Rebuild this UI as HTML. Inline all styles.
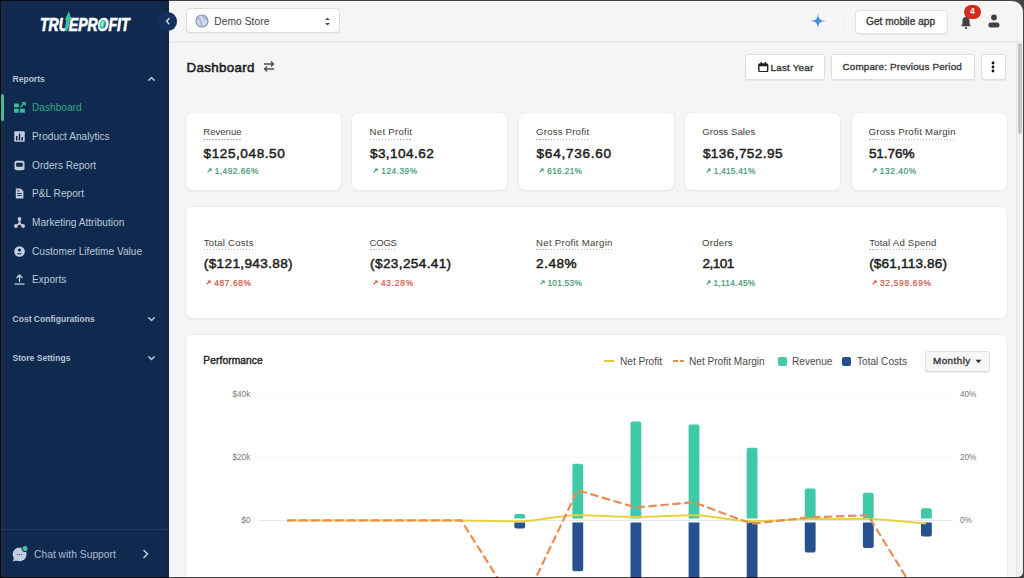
<!DOCTYPE html>
<html><head><meta charset="utf-8">
<style>
*{margin:0;padding:0;box-sizing:border-box}
html,body{width:1024px;height:578px;overflow:hidden;background:#0b0f18}
body{font-family:"Liberation Sans",sans-serif;position:relative}
#frame{position:absolute;left:0;top:0;width:1024px;height:578px;background:#f5f5f5;overflow:hidden}
#mask{position:absolute;left:1px;top:1px;width:1022px;height:576px;border-radius:2px 11px 5px 3px;box-shadow:0 0 0 30px rgba(0,0,0,.72);pointer-events:none}
#side{position:absolute;left:0;top:0;width:169px;height:578px;background:#0f2a4e}
#topbar{position:absolute;left:169px;top:0;width:855px;height:43px;background:#f5f5f5;border-bottom:2px solid #e8e8e8}
.t{position:absolute;white-space:nowrap;line-height:1}
.card{position:absolute;background:#fff;border-radius:6px;box-shadow:0 0 1.5px rgba(0,0,0,.09),0 1px 3px rgba(0,0,0,.06)}
.btn{position:absolute;background:#fff;border:1px solid #dcdcdc;border-radius:3px;box-shadow:0 1px 1px rgba(0,0,0,.06)}
.lbl{font-size:9.6px;color:#404040;padding-bottom:3px;line-height:1;background:repeating-linear-gradient(to right,#b8b8b8 0 1.5px,transparent 1.5px 3px) left bottom/100% 1px no-repeat}
.lbln{font-size:9.6px;color:#404040;line-height:1}
.val{font-size:13.6px;color:#1f1f1f;font-weight:normal;letter-spacing:.5px;-webkit-text-stroke:.5px #1f1f1f}
.pct{font-size:8.3px;font-weight:normal;-webkit-text-stroke:.22px currentColor}
.arr{position:absolute;width:5px;height:5px}
.g{color:#45957a}.r{color:#d4544a}
.nav{position:absolute;left:32px;font-size:10.15px;color:#bdc8d8;white-space:nowrap;line-height:1}
.sec{position:absolute;left:12.5px;font-size:8.55px;font-weight:bold;color:#b7c2d2;white-space:nowrap;line-height:1}
.ico{position:absolute;left:14px;width:11px;height:11px}
.leg{position:absolute;font-size:10.1px;color:#4a4a4a;white-space:nowrap;line-height:1}
.ax{position:absolute;font-size:8.2px;color:#777;white-space:nowrap;line-height:1}
</style></head><body>
<div id="frame">
  <!-- SIDEBAR -->
  <div id="side">
    <div style="position:absolute;left:1px;top:0;width:5px;height:578px;background:linear-gradient(to right,rgba(50,50,62,.32),rgba(50,50,62,.22) 70%,rgba(50,50,62,0))"></div>
    <!-- logo -->
    <svg style="position:absolute;left:0;top:0" width="169" height="42" viewBox="0 0 169 42">
      <text x="40" y="30.5" font-family="Liberation Sans" font-weight="bold" font-style="italic" font-size="17.6" fill="#fff" stroke="#fff" stroke-width="0.7" textLength="89.5" lengthAdjust="spacingAndGlyphs">TRUEPROFIT</text>
      <path d="M64.4 31 L66.7 19.5 L69.6 19.5 L67.3 31 Z" fill="#35c08e"/>
      <path d="M64.8 19.8 L68.8 11.3 L71.8 19.8 Z" fill="#35c08e"/>
      <ellipse cx="102.2" cy="24.2" rx="2.6" ry="4.6" transform="rotate(12 102.2 24.2)" fill="#4fcf9a"/>
      <ellipse cx="102.4" cy="23.6" rx="1.1" ry="2.5" transform="rotate(12 102.4 23.6)" fill="#a9e8cc"/>
    </svg>
    <div class="sec" style="top:74.8px">Reports</div>
    <svg style="position:absolute;left:147px;top:75.5px" width="9" height="6" viewBox="0 0 9 6"><path d="M1.3 4.6 L4.5 1.6 L7.7 4.6" fill="none" stroke="#a9b8d0" stroke-width="1.6"/></svg>
    <div style="position:absolute;left:1.2px;top:93.5px;width:2.5px;height:27.5px;background:#3cc29a;border-radius:2px"></div>
    <!-- dashboard icon -->
    <svg class="ico" style="left:14px;top:101px;width:12px;height:12px" viewBox="0 0 12 12"><g fill="#3dbb98"><rect x="0" y="2.6" width="4.8" height="3.9" rx=".4"/><rect x="0" y="7.7" width="4.8" height="4.1" rx=".4"/><rect x="6" y="7.7" width="4.8" height="4.1" rx=".4"/></g><path d="M6.3 6.3 L10.3 2.3" stroke="#3dbb98" stroke-width="1.3"/><path d="M7.3 1 H11.6 V5.3 Z" fill="#3dbb98"/></svg>
    <div class="nav" style="top:103.4px;color:#38a783">Dashboard</div>
    <!-- product analytics -->
    <svg class="ico" style="top:130.5px" viewBox="0 0 11 11"><rect x="0.3" y="0.3" width="10.4" height="10.4" rx="1" fill="#c3cddb"/><g fill="#0f2a4e"><rect x="2" y="5" width="1.5" height="4.5"/><rect x="4.8" y="2.5" width="1.5" height="7"/><rect x="7.5" y="6" width="1.5" height="3.5"/></g></svg>
    <div class="nav" style="top:132px">Product Analytics</div>
    <!-- orders -->
    <svg class="ico" style="top:159.5px" viewBox="0 0 11 11"><rect x="0.5" y="0.8" width="10" height="9.4" rx="2" fill="#c3cddb"/><path d="M2.2 2.8 H8.8 V6 Q8.8 6.8 8 6.8 H3 Q2.2 6.8 2.2 6 Z" fill="#0f2a4e"/></svg>
    <div class="nav" style="top:160.7px">Orders Report</div>
    <!-- P&L -->
    <svg class="ico" style="top:187.5px" viewBox="0 0 11 11"><path d="M1.8 0.4 H6.6 L9.4 3.2 V10.6 H1.8 Z" fill="#c3cddb"/><g fill="#0f2a4e"><rect x="3.2" y="5" width="4.6" height=".9"/><rect x="3.2" y="7.1" width="4.6" height=".9"/><rect x="3.2" y="2.5" width="2.2" height=".9"/></g></svg>
    <div class="nav" style="top:189.3px">P&amp;L Report</div>
    <!-- marketing -->
    <svg class="ico" style="top:216.5px" viewBox="0 0 11 11"><g fill="#c3cddb"><circle cx="5.5" cy="1.9" r="1.9"/><circle cx="1.9" cy="9" r="1.9"/><circle cx="9.1" cy="9" r="1.9"/><circle cx="5.5" cy="6.4" r="1.3"/></g><path d="M5.5 2 V6.4 L1.9 9 M5.5 6.4 L9.1 9" fill="none" stroke="#c3cddb" stroke-width="1.6"/></svg>
    <div class="nav" style="top:217.9px">Marketing Attribution</div>
    <!-- customer -->
    <svg class="ico" style="top:245.5px" viewBox="0 0 11 11"><circle cx="5.5" cy="5.5" r="5.3" fill="#c3cddb"/><circle cx="5.5" cy="4" r="1.6" fill="#0f2a4e"/><path d="M2.8 8.3 Q5.5 5.8 8.2 8.3" fill="#0f2a4e"/></svg>
    <div class="nav" style="top:246.6px">Customer Lifetime Value</div>
    <!-- exports -->
    <svg class="ico" style="top:274px" viewBox="0 0 11 11"><path d="M5.5 1 V8 M2.5 4 L5.5 1 L8.5 4" fill="none" stroke="#c3cddb" stroke-width="1.3"/><rect x="0.5" y="9.4" width="10" height="1.3" fill="#c3cddb"/></svg>
    <div class="nav" style="top:275.2px">Exports</div>

    <div class="sec" style="top:314.8px">Cost Configurations</div>
    <svg style="position:absolute;left:147px;top:316px" width="9" height="6" viewBox="0 0 9 6"><path d="M1.3 1.4 L4.5 4.4 L7.7 1.4" fill="none" stroke="#a9b8d0" stroke-width="1.6"/></svg>
    <div class="sec" style="top:353.8px">Store Settings</div>
    <svg style="position:absolute;left:147px;top:355px" width="9" height="6" viewBox="0 0 9 6"><path d="M1.3 1.4 L4.5 4.4 L7.7 1.4" fill="none" stroke="#a9b8d0" stroke-width="1.6"/></svg>

    <div style="position:absolute;left:161px;top:0;width:8px;height:578px;background:linear-gradient(to right,rgba(0,0,0,0),rgba(0,0,0,.07))"></div>
    <div style="position:absolute;left:0;top:529px;width:169px;height:1px;background:#1f3c63"></div>
    <!-- chat icon -->
    <svg style="position:absolute;left:11px;top:545px" width="18" height="18" viewBox="0 0 18 18"><circle cx="8.6" cy="9.3" r="6.9" fill="#c4cee2"/><path d="M3.2 12.5 L1.6 16.6 L6.5 15.3 Z" fill="#c4cee2"/><g fill="#3d4a60"><circle cx="6.4" cy="9.6" r=".6"/><circle cx="8.6" cy="9.6" r=".6"/><circle cx="10.8" cy="9.6" r=".6"/></g><circle cx="14" cy="3.6" r="3.1" fill="#42c29a" stroke="#0f2a4e" stroke-width="1"/></svg>
    <div class="nav" style="left:34px;top:549.8px;font-size:10.3px;color:#aebbcf">Chat with Support</div>
    <svg style="position:absolute;left:142px;top:549px" width="7" height="10" viewBox="0 0 7 10"><path d="M1.5 1 L5.5 5 L1.5 9" fill="none" stroke="#c3cddb" stroke-width="1.5"/></svg>
  </div>

  <!-- TOPBAR -->
  <div id="topbar">
    <div class="btn" style="left:16.8px;top:8.2px;width:154px;height:25px;border-radius:4px"></div>
    <svg style="position:absolute;left:26px;top:14px" width="14" height="14" viewBox="0 0 14 14"><circle cx="7" cy="7" r="6" fill="#cfdaf0" stroke="#8797b8" stroke-width="1.2"/><path d="M3 4.5 Q5.2 4.6 5.3 6.6 Q6.8 7.6 6.2 9.8 L7 12 M8.6 1.8 Q8 4.3 10.3 5 L12.3 6.2" fill="none" stroke="#8797b8" stroke-width="1"/></svg>
    <div class="t" style="left:45.2px;top:17.3px;font-size:10.2px;color:#404040;letter-spacing:.1px">Demo Store</div>
    <svg style="position:absolute;left:155.3px;top:16px" width="7" height="11" viewBox="0 0 7 11"><path d="M1 4 L3.5 1.5 L6 4 Z M1 7 L3.5 9.5 L6 7 Z" fill="#555"/></svg>

    <!-- sparkle -->
    <svg style="position:absolute;left:641px;top:13px" width="16" height="16" viewBox="0 0 16 16"><path d="M8 0 C8.2 6 10 7.8 16 8 C10 8.2 8.2 10 8 16 C7.8 10 6 8.2 0 8 C6 7.8 7.8 6 8 0Z" fill="#3a84da"/><circle cx="8" cy="8" r="1.3" fill="#4b98ec"/></svg>
    <div style="position:absolute;left:674px;top:12px;width:1px;height:19px;background:#ececec"></div>
    <div class="btn" style="left:686px;top:10px;width:93px;height:24px;border-radius:4px;border-color:#e2e2e2"></div>
    <div class="t" style="left:697px;top:16.8px;font-size:10.1px;color:#3a3a3a;-webkit-text-stroke:.35px #3a3a3a;letter-spacing:.05px">Get mobile app</div>
    <!-- bell -->
    <svg style="position:absolute;left:790px;top:15px" width="14" height="15" viewBox="0 0 14 15"><path d="M7 2 C4.6 2 3.4 3.9 3.4 6.2 V9.3 L2 11.3 H12 L10.6 9.3 V6.2 C10.6 3.9 9.4 2 7 2Z" fill="#404242"/><circle cx="7" cy="12.9" r="1.1" fill="#404242"/></svg>
    <div style="position:absolute;left:795.2px;top:5.2px;width:16.5px;height:13.5px;border-radius:7px;background:#d32b1d;color:#fff;font-size:8.5px;font-weight:bold;line-height:13.5px;text-align:center">4</div>
    <!-- user -->
    <svg style="position:absolute;left:818px;top:13px" width="14" height="16" viewBox="0 0 14 16"><circle cx="7" cy="4.5" r="2.9" fill="#404242"/><rect x="1.4" y="9.4" width="11.1" height="5" rx="2.5" fill="#404242"/></svg>
  </div>

  <!-- collapse circle -->
  <div style="position:absolute;left:158px;top:12px;width:18.5px;height:18.5px;border-radius:50%;background:#13315c"></div>
  <svg style="position:absolute;left:164.5px;top:17px" width="6" height="9" viewBox="0 0 6 9"><path d="M4.3 1.2 L1.6 4.3 L4.3 7.4" fill="none" stroke="#dfe6f0" stroke-width="1.3"/></svg>

  <!-- TITLE ROW -->
  <div class="t" style="left:186.5px;top:60.6px;font-size:13.3px;color:#1e1e1e;-webkit-text-stroke:.55px #1e1e1e;letter-spacing:.35px">Dashboard</div>
  <svg style="position:absolute;left:262px;top:60px" width="14" height="13" viewBox="0 0 14 13"><path d="M2 4 H11.5 M9 1.5 L11.5 4 L9 6.5 M12 9 H2.5 M5 6.5 L2.5 9 L5 11.5" fill="none" stroke="#4d4d4d" stroke-width="1.35"/></svg>

  <div class="btn" style="left:744.5px;top:54px;width:80.5px;height:25.5px"></div>
  <svg style="position:absolute;left:758.3px;top:61.5px" width="10.5" height="10.5" viewBox="0 0 10.5 10.5"><rect x=".8" y="2" width="8.9" height="7.7" rx="1.2" fill="none" stroke="#222" stroke-width="1.4"/><rect x=".8" y="2" width="8.9" height="2.3" fill="#222"/><rect x="2.5" y="0" width="1.3" height="2.3" fill="#222"/><rect x="6.7" y="0" width="1.3" height="2.3" fill="#222"/></svg>
  <div class="t" style="left:770.5px;top:62.6px;font-size:9.9px;color:#333;-webkit-text-stroke:.35px #333;letter-spacing:.2px">Last Year</div>
  <div class="btn" style="left:830.8px;top:54px;width:144px;height:25.5px"></div>
  <div class="t" style="left:842.5px;top:62.3px;font-size:9.9px;color:#3a3a3a;-webkit-text-stroke:.35px #3a3a3a;letter-spacing:.15px">Compare: Previous Period</div>
  <div class="btn" style="left:980.5px;top:54px;width:25.5px;height:25.5px"></div>
  <svg style="position:absolute;left:991px;top:61px" width="4" height="12" viewBox="0 0 4 12"><circle cx="2" cy="2" r="1.4" fill="#111"/><circle cx="2" cy="6" r="1.4" fill="#111"/><circle cx="2" cy="10" r="1.4" fill="#111"/></svg>

  <!-- scrollbar -->
  <div style="position:absolute;left:1016px;top:42px;width:8px;height:540px;background:#f1f1f1;border-left:1px solid #e4e4e4"></div>
  <div style="position:absolute;left:1017.5px;top:42.5px;width:4.5px;height:91px;background:#c4c4c4;border-radius:2px"></div>

  <!-- ROW 1 CARDS -->
  <div class="card" style="left:185.5px;top:112.5px;width:155px;height:77.5px"></div>
  <div class="card" style="left:352px;top:112.5px;width:155px;height:77.5px"></div>
  <div class="card" style="left:518.5px;top:112.5px;width:155px;height:77.5px"></div>
  <div class="card" style="left:685px;top:112.5px;width:155px;height:77.5px"></div>
  <div class="card" style="left:851.5px;top:112.5px;width:155px;height:77.5px"></div>
  <div class="card" style="left:185.5px;top:206.5px;width:821px;height:111px"></div>
  <!--CARDTEXT-->
  <div class="t lbl" style="left:203.3px;top:127.47px;letter-spacing:-0.03px">Revenue</div>
  <div class="t val" style="left:203.5px;top:146.99px;letter-spacing:0.57px">$125,048.50</div>
  <svg class="arr" style="left:206.8px;top:168.4px" viewBox="0 0 5 5"><path d="M0.6 4.4 L3.4 1.6" stroke="#3f8f70" stroke-width="1.1"/><path d="M1.5 0.4 H4.6 V3.5 Z" fill="#3f8f70"/></svg>
  <div class="t pct g" style="left:214.7px;top:166.97px;letter-spacing:0.49px">1,492.66%</div>
  <div class="t lbl" style="left:369.6px;top:127.47px;letter-spacing:0.27px">Net Profit</div>
  <div class="t val" style="left:369.9px;top:146.99px;letter-spacing:0.43px">$3,104.62</div>
  <svg class="arr" style="left:373.4px;top:168.4px" viewBox="0 0 5 5"><path d="M0.6 4.4 L3.4 1.6" stroke="#3f8f70" stroke-width="1.1"/><path d="M1.5 0.4 H4.6 V3.5 Z" fill="#3f8f70"/></svg>
  <div class="t pct g" style="left:381.3px;top:166.97px;letter-spacing:0.51px">124.39%</div>
  <div class="t lbl" style="left:536.1px;top:127.47px;letter-spacing:0.21px">Gross Profit</div>
  <div class="t val" style="left:536.6px;top:146.99px;letter-spacing:0.72px">$64,736.60</div>
  <svg class="arr" style="left:539.3px;top:168.4px" viewBox="0 0 5 5"><path d="M0.6 4.4 L3.4 1.6" stroke="#3f8f70" stroke-width="1.1"/><path d="M1.5 0.4 H4.6 V3.5 Z" fill="#3f8f70"/></svg>
  <div class="t pct g" style="left:547.2px;top:166.97px;letter-spacing:0.34px">616.21%</div>
  <div class="t lbln" style="left:702.3px;top:127.47px;letter-spacing:0.07px">Gross Sales</div>
  <div class="t val" style="left:702.9px;top:146.99px;letter-spacing:0.40px">$136,752.95</div>
  <svg class="arr" style="left:705.9px;top:168.4px" viewBox="0 0 5 5"><path d="M0.6 4.4 L3.4 1.6" stroke="#3f8f70" stroke-width="1.1"/><path d="M1.5 0.4 H4.6 V3.5 Z" fill="#3f8f70"/></svg>
  <div class="t pct g" style="left:713.8px;top:166.97px;letter-spacing:0.23px">1,415.41%</div>
  <div class="t lbl" style="left:868.6px;top:127.47px;letter-spacing:0.24px">Gross Profit Margin</div>
  <div class="t val" style="left:868.9px;top:146.99px;letter-spacing:-0.08px">51.76%</div>
  <svg class="arr" style="left:871.9px;top:168.4px" viewBox="0 0 5 5"><path d="M0.6 4.4 L3.4 1.6" stroke="#3f8f70" stroke-width="1.1"/><path d="M1.5 0.4 H4.6 V3.5 Z" fill="#3f8f70"/></svg>
  <div class="t pct g" style="left:879.8px;top:166.97px;letter-spacing:0.59px">132.40%</div>
  <div class="t lbl" style="left:203.8px;top:237.77px;letter-spacing:0.22px">Total Costs</div>
  <div class="t val" style="left:203.8px;top:257.49px;letter-spacing:0.35px">($121,943.88)</div>
  <svg class="arr" style="left:206.4px;top:280.3px" viewBox="0 0 5 5"><path d="M0.6 4.4 L3.4 1.6" stroke="#d04a3c" stroke-width="1.1"/><path d="M1.5 0.4 H4.6 V3.5 Z" fill="#d04a3c"/></svg>
  <div class="t pct r" style="left:214.3px;top:278.87px;letter-spacing:0.62px">487.68%</div>
  <div class="t lbl" style="left:369.6px;top:237.77px;letter-spacing:-0.29px">COGS</div>
  <div class="t val" style="left:370.1px;top:257.49px;letter-spacing:0.36px">($23,254.41)</div>
  <svg class="arr" style="left:373.0px;top:280.3px" viewBox="0 0 5 5"><path d="M0.6 4.4 L3.4 1.6" stroke="#d04a3c" stroke-width="1.1"/><path d="M1.5 0.4 H4.6 V3.5 Z" fill="#d04a3c"/></svg>
  <div class="t pct r" style="left:380.9px;top:278.87px;letter-spacing:0.81px">43.28%</div>
  <div class="t lbl" style="left:536.1px;top:237.77px;letter-spacing:0.27px">Net Profit Margin</div>
  <div class="t val" style="left:536.1px;top:257.49px;letter-spacing:0.49px">2.48%</div>
  <svg class="arr" style="left:539.5px;top:280.3px" viewBox="0 0 5 5"><path d="M0.6 4.4 L3.4 1.6" stroke="#3f8f70" stroke-width="1.1"/><path d="M1.5 0.4 H4.6 V3.5 Z" fill="#3f8f70"/></svg>
  <div class="t pct g" style="left:547.4px;top:278.87px;letter-spacing:0.27px">101.53%</div>
  <div class="t lbln" style="left:702.1px;top:237.77px;letter-spacing:0.25px">Orders</div>
  <div class="t val" style="left:702.5px;top:257.49px;letter-spacing:-0.53px">2,101</div>
  <svg class="arr" style="left:705.5px;top:280.3px" viewBox="0 0 5 5"><path d="M0.6 4.4 L3.4 1.6" stroke="#3f8f70" stroke-width="1.1"/><path d="M1.5 0.4 H4.6 V3.5 Z" fill="#3f8f70"/></svg>
  <div class="t pct g" style="left:713.4px;top:278.87px;letter-spacing:0.35px">1,114.45%</div>
  <div class="t lbl" style="left:869.2px;top:237.77px;letter-spacing:0.20px">Total Ad Spend</div>
  <div class="t val" style="left:869.2px;top:257.49px;letter-spacing:0.16px">($61,113.86)</div>
  <svg class="arr" style="left:872.1px;top:280.3px" viewBox="0 0 5 5"><path d="M0.6 4.4 L3.4 1.6" stroke="#d04a3c" stroke-width="1.1"/><path d="M1.5 0.4 H4.6 V3.5 Z" fill="#d04a3c"/></svg>
  <div class="t pct r" style="left:880.0px;top:278.87px;letter-spacing:0.74px">32,598.69%</div>
  <!--/CARDTEXT-->

  <!-- PERFORMANCE CARD -->
  <div class="card" style="left:185.5px;top:334.5px;width:821px;height:300px"></div>
  <div class="t" style="left:203.3px;top:356.3px;font-size:10.2px;color:#222;-webkit-text-stroke:.4px #222;letter-spacing:.1px">Performance</div>

  <!-- legend -->
  <div style="position:absolute;left:604px;top:359.5px;width:10px;height:2px;background:#ecc531"></div>
  <div class="leg" style="left:620px;top:356.6px">Net Profit</div>
  <div style="position:absolute;left:673px;top:359.5px;width:4.5px;height:2px;background:#ea8a4a"></div>
  <div style="position:absolute;left:679.5px;top:359.5px;width:4.5px;height:2px;background:#ea8a4a"></div>
  <div class="leg" style="left:689px;top:356.6px">Net Profit Margin</div>
  <div style="position:absolute;left:777.5px;top:356.5px;width:9px;height:9px;border-radius:2px;background:#43c9a5"></div>
  <div class="leg" style="left:792px;top:356.6px">Revenue</div>
  <div style="position:absolute;left:842px;top:356.5px;width:9px;height:9px;border-radius:2px;background:#244f8b"></div>
  <div class="leg" style="left:857px;top:356.6px">Total Costs</div>
  <div class="btn" style="left:924.5px;top:351px;width:65px;height:20.5px;background:#f6f6f6;border-color:#dedede;box-shadow:0 1px 1px rgba(0,0,0,.08)"></div>
  <div class="t" style="left:933px;top:356.3px;font-size:9.9px;color:#333;-webkit-text-stroke:.35px #333;letter-spacing:.45px">Monthly</div>
  <svg style="position:absolute;left:974.5px;top:358.5px" width="7" height="5" viewBox="0 0 7 5"><path d="M0.5 0.8 H6.5 L3.5 4.2Z" fill="#333"/></svg>

  <!-- axes -->
  <div class="ax" style="left:232.5px;top:390.8px">$40k</div>
  <div class="ax" style="left:232.5px;top:453.8px">$20k</div>
  <div class="ax" style="left:241.5px;top:517.0px">$0</div>
  <div class="ax" style="left:960px;top:390.8px">40%</div>
  <div class="ax" style="left:960px;top:453.8px">20%</div>
  <div class="ax" style="left:960px;top:517.0px">0%</div>

  <svg style="position:absolute;left:0;top:0" width="1024" height="578" viewBox="0 0 1024 578">
    <g stroke="#eeeeee" stroke-width="1" stroke-dasharray="2 2">
      <line x1="258" y1="394.5" x2="953" y2="394.5"/>
      <line x1="258" y1="457.5" x2="953" y2="457.5"/>
    </g>
    <line x1="258" y1="520.5" x2="953" y2="520.5" stroke="#e8e8e8" stroke-width="1"/>
    <!-- bars -->
    <path d="M514.3 518.6 V516.0 Q514.3 514.0 516.3 514.0 H523.1 Q525.1 514.0 525.1 516.0 V518.6 Z" fill="#40c9a7"/>
    <path d="M514.3 522.6 V526.6 Q514.3 528.6 516.3 528.6 H523.1 Q525.1 528.6 525.1 526.6 V522.6 Z" fill="#26518e"/>
    <path d="M572.4 518.6 V465.8 Q572.4 463.8 574.4 463.8 H581.2 Q583.2 463.8 583.2 465.8 V518.6 Z" fill="#40c9a7"/>
    <path d="M572.4 522.6 V569.3 Q572.4 571.3 574.4 571.3 H581.2 Q583.2 571.3 583.2 569.3 V522.6 Z" fill="#26518e"/>
    <path d="M630.5 518.6 V423.6 Q630.5 421.6 632.5 421.6 H639.3 Q641.3 421.6 641.3 423.6 V518.6 Z" fill="#40c9a7"/>
    <path d="M630.5 522.6 V618.0 Q630.5 620.0 632.5 620.0 H639.3 Q641.3 620.0 641.3 618.0 V522.6 Z" fill="#26518e"/>
    <path d="M688.6 518.6 V426.5 Q688.6 424.5 690.6 424.5 H697.4 Q699.4 424.5 699.4 426.5 V518.6 Z" fill="#40c9a7"/>
    <path d="M688.6 522.6 V618.0 Q688.6 620.0 690.6 620.0 H697.4 Q699.4 620.0 699.4 618.0 V522.6 Z" fill="#26518e"/>
    <path d="M746.7 518.6 V449.8 Q746.7 447.8 748.7 447.8 H755.5 Q757.5 447.8 757.5 449.8 V518.6 Z" fill="#40c9a7"/>
    <path d="M746.7 522.6 V618.0 Q746.7 620.0 748.7 620.0 H755.5 Q757.5 620.0 757.5 618.0 V522.6 Z" fill="#26518e"/>
    <path d="M804.8 518.6 V490.5 Q804.8 488.5 806.8 488.5 H813.6 Q815.6 488.5 815.6 490.5 V518.6 Z" fill="#40c9a7"/>
    <path d="M804.8 522.6 V550.4 Q804.8 552.4 806.8 552.4 H813.6 Q815.6 552.4 815.6 550.4 V522.6 Z" fill="#26518e"/>
    <path d="M862.9 518.6 V494.8 Q862.9 492.8 864.9 492.8 H871.7 Q873.7 492.8 873.7 494.8 V518.6 Z" fill="#40c9a7"/>
    <path d="M862.9 522.6 V546.0 Q862.9 548.0 864.9 548.0 H871.7 Q873.7 548.0 873.7 546.0 V522.6 Z" fill="#26518e"/>
    <path d="M921.0 518.6 V510.3 Q921.0 508.3 923.0 508.3 H929.8 Q931.8 508.3 931.8 510.3 V518.6 Z" fill="#40c9a7"/>
    <path d="M921.0 522.6 V534.5 Q921.0 536.5 923.0 536.5 H929.8 Q931.8 536.5 931.8 534.5 V522.6 Z" fill="#26518e"/>
    <!-- net profit line (yellow) -->
    <path d="M287 520.4 L461.3 520.4 C480 520.6 500 521.4 519.4 521.3 C540 521 556 515.6 577.5 515.2 C598 515.2 615 517 635.6 517 C655 517 675 515.2 693.7 515.2 C715 515.4 730 521 751.8 521.3 C772 521.3 790 519 809.9 519 L868 519 C890 519.5 905 522 926 523.4" fill="none" stroke="#e8d040" stroke-width="2"/>
    <!-- net profit margin (orange dashed) -->
    <path d="M287 520.4 L461.3 520.4 L519.4 612.5 L577.5 490.2 L635.6 507.4 L693.7 502.3 L751.8 523.8 L809.9 517.3 L868 515.2 L926 609.6" fill="none" stroke="#e98d55" stroke-width="2.2" stroke-dasharray="8.5 3.5"/>
  </svg>
</div>
<div id="mask"></div>
</body></html>
